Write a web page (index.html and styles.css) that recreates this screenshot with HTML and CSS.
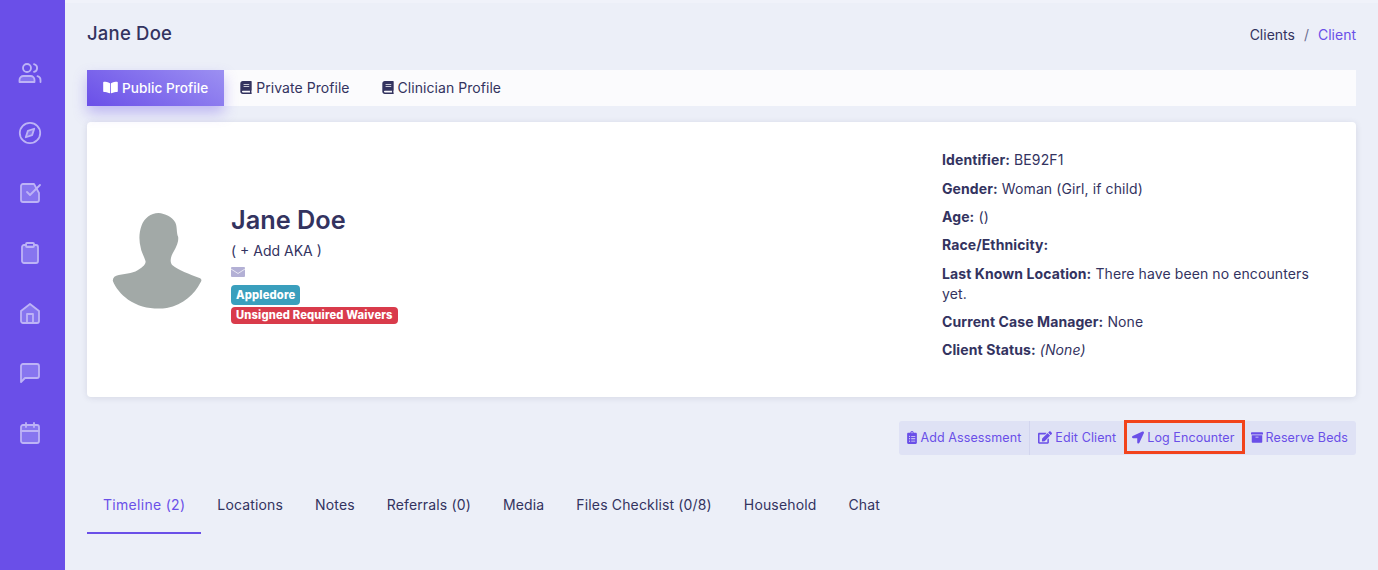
FILE: index.html
```html
<!DOCTYPE html>
<html lang="en">
<head>
<meta charset="utf-8">
<title>Jane Doe</title>
<link rel="stylesheet" href="styles.css">
</head>
<body>
<div class="app">
  <nav class="sidebar">
    <svg class="nav-icon" viewBox="0 0 24 24"><path class="soft" d="M1.500 21v-2a4 4 0 0 1 4-4h7a4 4 0 0 1 4 4v2z"/><circle cx="9" cy="7" r="4"/><path d="M16 3.100a4 4 0 0 1 0 7.800M22.500 21v-2a4 4 0 0 0-3-3.900"/></svg>
    <svg class="nav-icon" viewBox="0 0 24 24"><circle cx="12" cy="12" r="10.200"/><polygon class="soft" points="16.240 7.760 14.120 14.120 7.760 16.240 9.880 9.880"/></svg>
    <svg class="nav-icon" viewBox="0 0 24 24"><path class="soft" d="M16 3H5a2 2 0 0 0-2 2v14a2 2 0 0 0 2 2h14a2 2 0 0 0 2-2v-7z"/><path class="none" d="M9 11l3 3L22 4"/></svg>
    <svg class="nav-icon" viewBox="0 0 24 24"><path class="soft" d="M16 4h2a2 2 0 0 1 2 2v14a2 2 0 0 1-2 2H6a2 2 0 0 1-2-2V6a2 2 0 0 1 2-2h2"/><rect x="8" y="2" width="8" height="4" rx="1"/></svg>
    <svg class="nav-icon" viewBox="0 0 24 24"><path class="soft" d="M3 10l9-7 9 7v10a2 2 0 0 1-2 2H5a2 2 0 0 1-2-2z"/><path class="none" d="M9 22v-9h6v9"/></svg>
    <svg class="nav-icon" viewBox="0 0 24 24"><path class="soft" d="M21 15a2 2 0 0 1-2 2H7l-4 4V5a2 2 0 0 1 2-2h14a2 2 0 0 1 2 2z"/></svg>
    <svg class="nav-icon" viewBox="0 0 24 24"><rect class="soft" x="3" y="4" width="18" height="18" rx="2"/><path class="none" d="M16 2v4M8 2v4M3 10h18"/></svg>
  </nav>

  <main class="content">
    <header class="page-head">
      <h1 class="page-title">Jane Doe</h1>
      <div class="crumbs"><span>Clients</span><span class="crumb-sep">/</span><span class="crumb-current">Client</span></div>
    </header>

    <div class="profile-tabs">
      <a class="profile-tab is-active"><svg class="fa fa-open" viewBox="0 0 576 512"><path d="M542.220 32.050c-54.800 3.110-163.720 14.430-230.960 55.590-4.640 2.840-7.270 7.890-7.270 13.170v363.870c0 11.550 12.630 18.850 23.280 13.490 69.180-34.820 169.230-44.320 218.700-46.920 16.890-.89 30.020-14.430 30.020-30.660V62.750c.01-17.710-15.350-31.740-33.770-30.700zM264.730 87.640C197.500 46.480 88.580 35.170 33.780 32.050 15.360 31.010 0 45.040 0 62.750V400.600c0 16.240 13.130 29.780 30.020 30.660 49.490 2.600 149.590 12.110 218.770 46.950 10.620 5.350 23.210-1.940 23.210-13.460V100.630c0-5.290-2.620-10.140-7.270-12.990z"/></svg>Public Profile</a>
      <a class="profile-tab"><svg class="fa" viewBox="0 0 448 512"><path d="M448 360V24c0-13.300-10.700-24-24-24H96C43 0 0 43 0 96v320c0 53 43 96 96 96h328c13.300 0 24-10.700 24-24v-16c0-7.500-3.500-14.300-8.900-18.700-4.200-15.400-4.200-59.300 0-74.700 5.400-4.300 8.900-11.100 8.900-18.600zM128 134c0-3.300 2.700-6 6-6h212c3.300 0 6 2.700 6 6v20c0 3.300-2.700 6-6 6H134c-3.300 0-6-2.700-6-6v-20zm0 64c0-3.300 2.700-6 6-6h212c3.300 0 6 2.700 6 6v20c0 3.300-2.700 6-6 6H134c-3.300 0-6-2.700-6-6v-20zm253.400 250H96c-17.700 0-32-14.300-32-32 0-17.600 14.400-32 32-32h285.400c-1.900 17.100-1.900 46.900 0 64z"/></svg>Private Profile</a>
      <a class="profile-tab"><svg class="fa" viewBox="0 0 448 512"><path d="M448 360V24c0-13.300-10.700-24-24-24H96C43 0 0 43 0 96v320c0 53 43 96 96 96h328c13.300 0 24-10.700 24-24v-16c0-7.500-3.500-14.300-8.900-18.700-4.200-15.400-4.200-59.300 0-74.700 5.400-4.300 8.900-11.100 8.900-18.600zM128 134c0-3.300 2.700-6 6-6h212c3.300 0 6 2.700 6 6v20c0 3.300-2.700 6-6 6H134c-3.300 0-6-2.700-6-6v-20zm0 64c0-3.300 2.700-6 6-6h212c3.300 0 6 2.700 6 6v20c0 3.300-2.700 6-6 6H134c-3.300 0-6-2.700-6-6v-20zm253.400 250H96c-17.700 0-32-14.300-32-32 0-17.600 14.400-32 32-32h285.400c-1.900 17.100-1.900 46.900 0 64z"/></svg>Clinician Profile</a>
    </div>

    <section class="card">
      <div class="identity">
        <svg class="avatar" viewBox="36 40 272 288"><path d="M175 40C195 42 215 50 225 68C232 82 228 98 234 112C236 128 226 146 218 160C212 172 208 186 216 196C232 210 268 224 300 236C306 240 304 244 300 250C284 282 250 316 200 325C160 331 116 322 84 300C62 284 46 264 38 244C37 234 44 228 56 226C80 222 104 220 118 208C128 202 138 192 136 184C132 170 124 158 122 146C116 124 116 100 124 78C132 56 152 40 175 40Z"/></svg>
        <div class="who">
          <h2 class="who-name">Jane Doe</h2>
          <div class="who-aka">( + Add AKA )</div>
          <svg class="mail" viewBox="0 0 14 10"><rect width="14" height="10" rx="1"/><path d="M0 2l7 4.500L14 2"/></svg>
          <span class="badge badge-teal">Appledore</span>
          <span class="badge badge-red">Unsigned Required Waivers</span>
        </div>
      </div>
      <div class="facts">
        <p><b>Identifier:</b> BE92F1</p>
        <p><b>Gender:</b> Woman (Girl, if child)</p>
        <p><b>Age:</b> ()</p>
        <p><b>Race/Ethnicity:</b></p>
        <p><b>Last Known Location:</b> There have been no encounters yet.</p>
        <p><b>Current Case Manager:</b> None</p>
        <p><b>Client Status:</b> <i>(None)</i></p>
      </div>
    </section>

    <div class="actions-row">
      <div class="actions">
        <a class="action action-first"><svg class="fa fa-slim" viewBox="0 0 384 512"><path d="M336 64h-80c0-35.300-28.700-64-64-64s-64 28.700-64 64H48C21.500 64 0 85.500 0 112v352c0 26.500 21.500 48 48 48h288c26.500 0 48-21.500 48-48V112c0-26.500-21.500-48-48-48zM96 424c-13.300 0-24-10.700-24-24s10.700-24 24-24 24 10.700 24 24-10.700 24-24 24zm0-96c-13.300 0-24-10.700-24-24s10.700-24 24-24 24 10.700 24 24-10.700 24-24 24zm0-96c-13.300 0-24-10.700-24-24s10.700-24 24-24 24 10.700 24 24-10.700 24-24 24zm96-192c13.300 0 24 10.700 24 24s-10.700 24-24 24-24-10.700-24-24 10.700-24 24-24zm128 368c0 4.400-3.600 8-8 8H168c-4.400 0-8-3.600-8-8v-16c0-4.400 3.600-8 8-8h144c4.400 0 8 3.600 8 8v16zm0-96c0 4.400-3.600 8-8 8H168c-4.400 0-8-3.600-8-8v-16c0-4.400 3.600-8 8-8h144c4.400 0 8 3.600 8 8v16zm0-96c0 4.400-3.600 8-8 8H168c-4.400 0-8-3.600-8-8v-16c0-4.400 3.600-8 8-8h144c4.400 0 8 3.600 8 8v16z"/></svg>Add Assessment</a>
        <a class="action"><svg class="fa fa-wide" viewBox="0 0 576 512"><path d="M402.600 83.200l90.200 90.200c3.800 3.800 3.800 10 0 13.800L274.400 405.600l-92.800 10.300c-12.400 1.400-22.900-9.100-21.500-21.500l10.300-92.800L388.800 83.200c3.800-3.800 10-3.800 13.800 0zm162-22.900l-48.800-48.800c-15.200-15.200-39.900-15.200-55.200 0l-35.400 35.400c-3.800 3.800-3.800 10 0 13.800l90.200 90.200c3.800 3.800 10 3.800 13.800 0l35.400-35.400c15.200-15.300 15.200-40 0-55.200zM384 346.200V448H64V128h229.800c3.200 0 6.200-1.300 8.500-3.500l40-40c7.600-7.600 2.200-20.500-8.500-20.500H48C21.500 64 0 85.500 0 112v352c0 26.500 21.500 48 48 48h352c26.500 0 48-21.500 48-48V306.200c0-10.700-12.900-16-20.500-8.500l-40 40c-2.200 2.300-3.500 5.300-3.500 8.500z"/></svg>Edit Client</a>
        <a class="action action-marked"><svg class="fa" viewBox="0 0 512 512"><path d="M444.520 3.520L28.740 195.420c-47.970 22.390-31.980 92.750 19.190 92.750h175.910v175.910c0 51.170 70.360 67.170 92.750 19.190l191.900-415.780c15.990-38.390-25.590-79.970-63.970-63.970z"/></svg>Log Encounter</a>
        <a class="action"><svg class="fa" viewBox="0 0 512 512"><path d="M32 448c0 17.700 14.300 32 32 32h384c17.700 0 32-14.300 32-32V160H32v288zm160-212c0-6.600 5.400-12 12-12h104c6.600 0 12 5.400 12 12v8c0 6.600-5.400 12-12 12H204c-6.600 0-12-5.400-12-12v-8zM480 32H32C14.300 32 0 46.300 0 64v48c0 8.800 7.200 16 16 16h480c8.800 0 16-7.200 16-16V64c0-17.700-14.300-32-32-32z"/></svg>Reserve Beds</a>
      </div>
    </div>

    <div class="section-tabs">
      <a class="section-tab is-active">Timeline (2)</a>
      <a class="section-tab">Locations</a>
      <a class="section-tab">Notes</a>
      <a class="section-tab">Referrals (0)</a>
      <a class="section-tab">Media</a>
      <a class="section-tab">Files Checklist (0/8)</a>
      <a class="section-tab">Household</a>
      <a class="section-tab">Chat</a>
    </div>
  </main>
</div>
</body>
</html>
```
FILE: styles.css
```css
* { box-sizing: border-box; }
html, body { margin: 0; height: 100%; overflow: hidden; }
body {
  font-family: "Inter", "Open Sans", sans-serif;
  color: #33335f;
  background: #eceff8;
  font-size: 14px;
}
.app { display: flex; height: 570px; }
.sidebar {
  width: 65px;
  flex: none;
  background: #6a4fe8;
  padding: 61px 5px 0 0;
  display: flex;
  flex-direction: column;
  align-items: center;
  gap: 36px;
}
.nav-icon {
  width: 24px;
  height: 24px;
  fill: none;
  stroke: #bdb3f6;
  stroke-width: 1.800;
  stroke-linecap: round;
  stroke-linejoin: round;
}
.nav-icon .soft { fill: #8775ef; }
.nav-icon .none { fill: none; }
.content { flex: 1; padding: 0 22px; min-width: 0; border-top: 3px solid #f0f2fa; }
.page-head {
  height: 67px;
  display: flex;
  justify-content: space-between;
  align-items: center;
  padding-bottom: 8px;
}
.page-title { margin: 0; font-size: 18.500px; font-weight: 500; letter-spacing: .2px; }
.crumbs { display: flex; gap: 9px; font-size: 14px; padding-top: 4px; }
.crumb-sep { color: #6c6f93; }
.crumb-current { color: #6a4fe8; }
.profile-tabs {
  height: 36px;
  display: flex;
  background: #fbfbfd;
  margin-bottom: 16px;
}
.profile-tab {
  display: flex;
  align-items: center;
  gap: 4px;
  padding: 0 16px 1px;
  font-size: 14px;
  letter-spacing: .05px;
}
.profile-tab.is-active {
  color: #fff;
  font-size: 13.600px;
  font-weight: 500;
  background: linear-gradient(30deg, #6a4fe8, #9c90f2);
  box-shadow: 0 7px 14px rgba(106, 79, 232, .35);
}
.fa { width: 12px; height: 13px; fill: currentColor; flex: none; }
.fa-open { width: 15px; }
.fa-wide { width: 14px; }
.fa-slim { width: 10px; }
.card {
  height: 275px;
  background: #fff;
  border-radius: 4px;
  box-shadow: 0 1px 6px rgba(50, 50, 93, .12);
  display: flex;
  justify-content: space-between;
  align-items: center;
  padding: 0 30px 0 25px;
}
.identity { display: flex; align-items: center; gap: 28px; padding-top: 3px; }
.avatar { width: 91px; height: 96px; fill: #a2a9a7; flex: none; }
.who { display: flex; flex-direction: column; align-items: flex-start; padding-top: 7px; }
.who-name { margin: 0 0 6px; font-size: 25.300px; font-weight: 600; line-height: 30px; }
.who-aka { font-size: 14px; line-height: 20px; margin-bottom: 6px; }
.mail { width: 14px; height: 10px; margin-bottom: 8px; }
.mail rect { fill: #b3b0d5; }
.mail path { fill: none; stroke: #fff; stroke-width: .7; }
.badge {
  color: #fff;
  font-size: 11.200px;
  font-weight: 800;
  line-height: 17px;
  padding: 0 5px;
  border-radius: 4px;
  margin-bottom: 2px;
  letter-spacing: .15px;
}
.badge-teal { background: #3a9fbd; line-height: 20px; }
.badge-red { background: #d93b4b; margin-bottom: 0; }
.facts { width: 384px; padding-bottom: 8px; }
.facts p { margin: 0 0 8px; line-height: 20.300px; font-size: 14px; letter-spacing: .1px; }
.facts p:last-child { margin-bottom: 0; }
.facts b { font-weight: 700; }
.actions-row { display: flex; justify-content: flex-end; margin-top: 24px; }
.actions {
  display: flex;
  height: 34px;
  background: #dfe2f5;
  border-radius: 3px;
}
.action {
  display: flex;
  align-items: center;
  gap: 3px;
  padding: 0 8px 1px;
  font-size: 12.500px;
  color: #6a4fe8;
  letter-spacing: .1px;
  position: relative;
}
.action-first { border-right: 1px solid #d2d5ee; }
.action-marked::after {
  content: "";
  position: absolute;
  top: -1px;
  right: -2px;
  bottom: 1px;
  left: 0;
  border: 3px solid #f2431c;
}
.section-tabs { display: flex; margin-top: 33px; height: 46px; }
.section-tab {
  padding: 0 16px 12px;
  display: flex;
  align-items: center;
  font-size: 14px;
  letter-spacing: .15px;
  border-bottom: 2px solid transparent;
}
.section-tab.is-active { color: #6a4fe8; border-bottom-color: #6a4fe8; letter-spacing: .3px; }
```
